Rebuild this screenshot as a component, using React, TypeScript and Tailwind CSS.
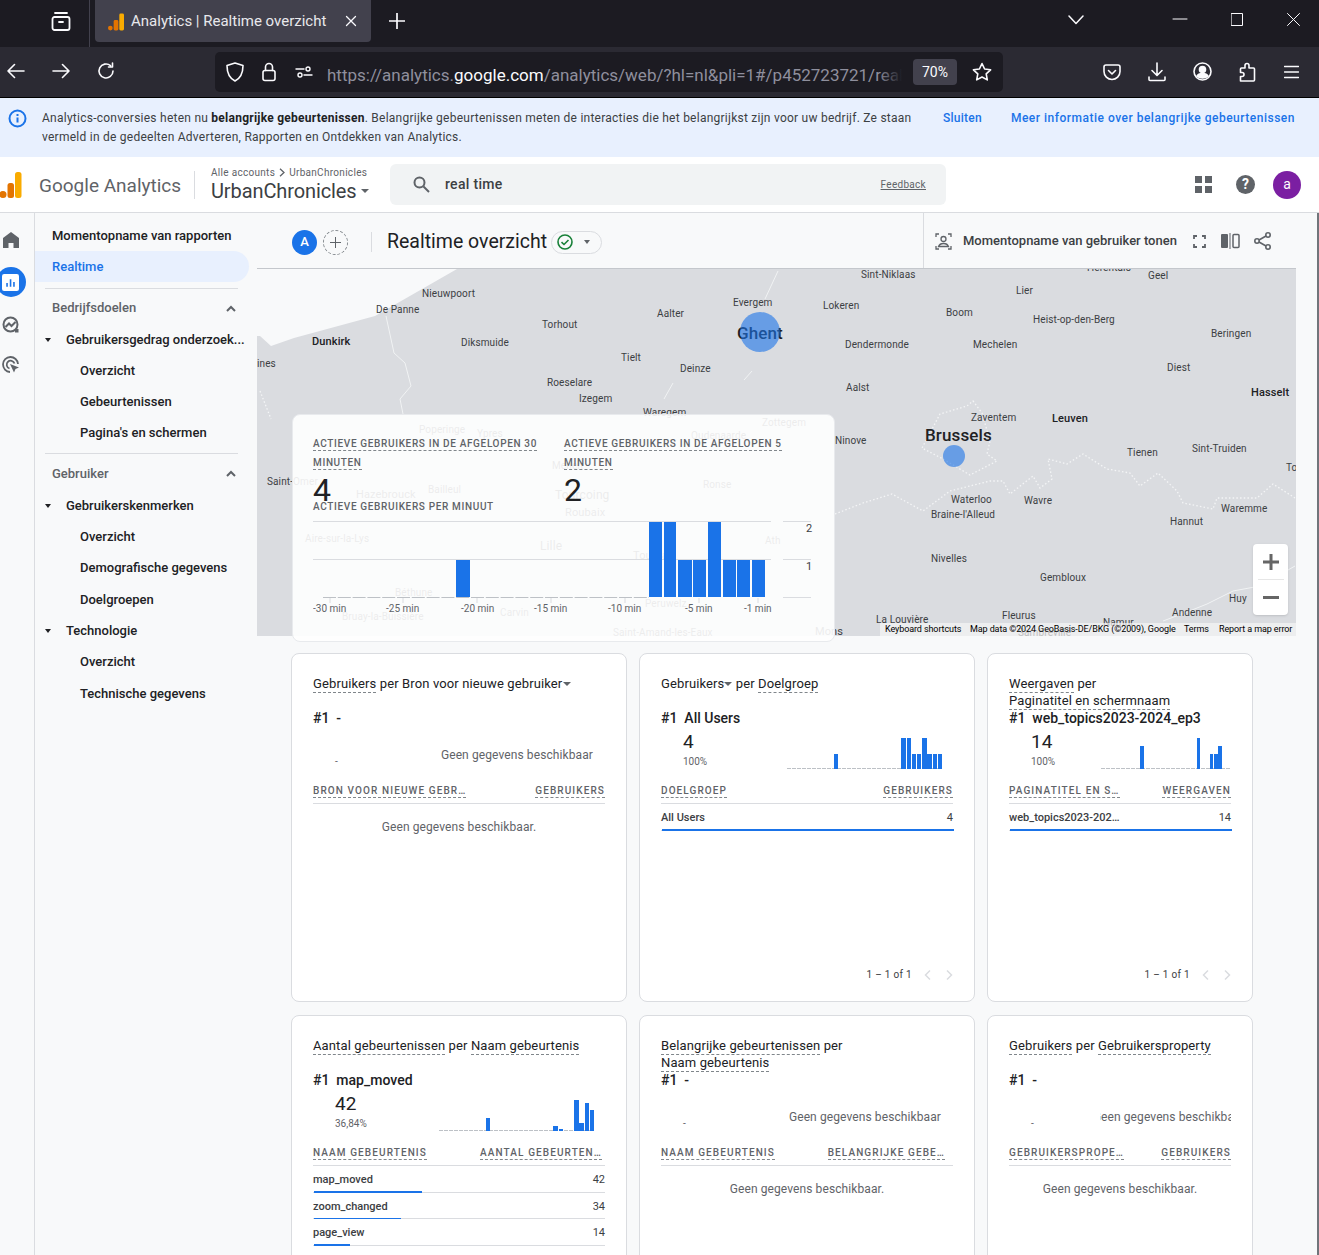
import React from "react";

const LABELS: [string, number, number, number, string?][] = [
  ["Sint-Niklaas", 861, 274, 10],["Herentals", 1087, 267, 10],["Geel", 1148, 275, 10],["Nieuwpoort", 422, 293, 10],["Evergem", 733, 302, 10],["Lokeren", 823, 305, 10],["Lier", 1016, 290, 10],["De Panne", 376, 309, 10],["Aalter", 657, 313, 10],["Boom", 946, 312, 10],["Heist-op-den-Berg", 1033, 319, 10],["Torhout", 542, 324, 10],["Beringen", 1211, 333, 10],["Dunkirk", 312, 340, 11, "m"],["Diksmuide", 461, 342, 10],["Dendermonde", 845, 344, 10],["Mechelen", 973, 344, 10],["Tielt", 621, 357, 10],["ines", 257, 363, 10],["Deinze", 680, 368, 10],["Diest", 1167, 367, 10],["Roeselare", 547, 382, 10],["Izegem", 579, 398, 10],["Aalst", 846, 387, 10],["Hasselt", 1251, 391, 11, "m"],["Waregem", 643, 412, 10],["Zottegem", 762, 422, 10],["Zaventem", 971, 417, 10],["Leuven", 1052, 417, 11, "m"],["Ninove", 835, 440, 10],["Brussels", 925, 434, 17, "m"],["Tienen", 1127, 452, 10],["Sint-Truiden", 1192, 448, 10],["To", 1286, 467, 10],["Saint-Omer", 267, 481, 10],["Waterloo", 951, 499, 10],["Wavre", 1024, 500, 10],["Braine-l'Alleud", 931, 514, 10],["Waremme", 1221, 508, 10],["Hannut", 1170, 521, 10],["Nivelles", 931, 558, 10],["Gembloux", 1040, 577, 10],["La Louvière", 876, 619, 10],["Fleurus", 1002, 615, 10],["Andenne", 1172, 612, 10],["Huy", 1229, 598, 10],["Namur", 1103, 622, 10],["Sambreville", 1018, 632, 10],["Mons", 815, 630, 11],["Ghent", 737, 332, 17, "m"],["Poperinge", 419, 429, 10],["Ypres", 477, 433, 10],["Oudenaarde", 691, 435, 10],["Menen", 552, 465, 10],["Hazebrouck", 356, 493, 11],["Bailleul", 428, 489, 10],["Tourcoing", 555, 494, 12],["Ronse", 703, 484, 10],["Roubaix", 565, 511, 11],["Aire-sur-la-Lys", 305, 538, 10],["Lille", 540, 545, 12],["Tournai", 633, 554, 11],["Ath", 765, 540, 10],["Béthune", 395, 592, 10],["Peruwelz", 645, 603, 10],["Carvin", 500, 612, 10],["Bruay-la-Buissière", 342, 616, 10],["Saint-Amand-les-Eaux", 613, 632, 10],
];

const Dash = ({ children, className = "" }: { children: React.ReactNode; className?: string }) => (
  <span className={"border-b border-dashed border-[#80868b] pb-px " + className}>{children}</span>
);

function Spark({ w, bars }: { w: number; bars: [number, number, number][] }) {
  return (
    <svg width={w} height={40} viewBox={`0 0 ${w} 40`} className="block shrink-0">
      <line x1="0" x2={w} y1="39.5" y2="39.5" stroke="#bdc1c6" strokeDasharray="4 1" />
      {bars.map(([x, bw, h], i) => (
        <rect key={i} x={x} y={40 - h} width={bw} height={h} fill="#1a73e8" />
      ))}
    </svg>
  );
}

type Row = { name: string; value: string; bar: number };
function Card({
  title, rank, value, pct, spark, head, headPr = 0, rows, pager, leftW = 126, empty, clip,
}: {
  title: React.ReactNode; rank: string; value?: string; pct?: string; spark?: React.ReactNode;
  head: [string, string]; headPr?: number; rows?: Row[]; pager?: boolean; leftW?: number; empty?: string; clip?: boolean;
}) {
  return (
    <div className="bg-white rounded-lg border border-[#dadce0] px-[21px] pt-[21px] pb-[19px] flex flex-col overflow-hidden">
      <div className="h-[35px] text-[13px] leading-[17px] tracking-[0.12px] text-[#202124]">{title}</div>
      <div className="h-[17px] leading-[17px] text-[14px] font-medium text-[#202124] whitespace-nowrap">{rank}</div>
      <div className="h-[50px]">
        {value ? (
          <div className="flex pt-[2px]">
            <div className="shrink-0 pt-[1px]" style={{ width: leftW }}>
              <div className="pl-[22px] text-[19px] leading-[24px] text-[#202124]">{value}</div>
              <div className="pl-[22px] text-[10px] leading-[14px] text-[#5f6368] mt-[1px]">{pct}</div>
            </div>
            {spark}
          </div>
        ) : (
          <div className="flex items-start h-full overflow-hidden">
            <div className="w-[22px] shrink-0" />
            <div className="text-[10px] leading-[12px] mt-[29px] text-[#5f6368]">-</div>
            {clip ? (
              <div className="flex-1 ml-[66px] mt-[20px] overflow-hidden">
                <div className="-ml-[7px] text-[12px] leading-[16px] tracking-[0.1px] text-[#5f6368] whitespace-nowrap">Geen gegevens beschikbaar</div>
              </div>
            ) : (
              <div className="flex-1 text-right text-[12px] leading-[16px] tracking-[0.1px] mt-[20px] text-[#5f6368] whitespace-nowrap pr-[12px]">Geen gegevens beschikbaar</div>
            )}
          </div>
        )}
      </div>
      <div className="h-[27px] flex justify-between border-b border-[#dadce0] text-[10px] leading-[13px] font-medium tracking-[1.1px] text-[#5f6368] pt-[7px] whitespace-nowrap" style={{ paddingRight: headPr }}>
        <div><Dash>{head[0]}</Dash></div>
        <div><Dash>{head[1]}</Dash></div>
      </div>
      {rows ? (
        <div>
          {rows.map((r) => (
            <div key={r.name} className="relative h-[26.5px] flex justify-between items-center border-b border-[#dadce0] text-[11px] font-medium text-[#3c4043] pt-[3px]">
              <span>{r.name}</span><span className="font-normal text-[#3c4043]">{r.value}</span>
              <div className="absolute left-[1px] -bottom-px h-[1.5px] bg-[#1a73e8]" style={{ width: r.bar }} />
            </div>
          ))}
        </div>
      ) : (
        <div className="text-center text-[12px] tracking-[0.1px] text-[#5f6368] mt-[15px] leading-[16px]">{empty}</div>
      )}
      {pager && (
        <div className="mt-auto flex justify-end items-center gap-[11px] text-[10px] tracking-[0.3px] text-[#3c4043] leading-[14px] -mr-px">
          <span>1 – 1 of 1</span>
          <svg width="10" height="12" viewBox="0 0 10 12" fill="none" stroke="#dadce0" strokeWidth="1.5"><path d="M7 1.5 2.5 6 7 10.5" /></svg>
          <svg width="10" height="12" viewBox="0 0 10 12" fill="none" stroke="#dadce0" strokeWidth="1.5"><path d="M3 1.5 7.5 6 3 10.5" /></svg>
        </div>
      )}
    </div>
  );
}

const NavRow = ({ children, indent = 45, h = 31 }: { children: React.ReactNode; indent?: number; h?: number }) => (
  <div className="flex items-center text-[13px] font-medium text-[#202124] whitespace-nowrap" style={{ paddingLeft: indent, height: h }}>{children}</div>
);
const Caret = () => <span className="w-0 h-0 border-x-[3.5px] border-x-transparent border-t-[4px] border-t-[#202124] absolute left-[10px]" />;
const Chev = () => (
  <svg width="10" height="7" viewBox="0 0 10 7" fill="none" stroke="#5f6368" strokeWidth="2" className="ml-auto mr-[21px]"><path d="M1 6l4-4 4 4" /></svg>
);
const ic = { fill: "none", stroke: "#fbfbfe", strokeWidth: 1.6, strokeLinecap: "round", strokeLinejoin: "round" } as const;
const T = "inline-block mb-[2px] w-0 h-0 border-x-[4px] border-x-transparent border-t-[4px] border-t-[#5f6368]";

export default function App() {
  return (
    <div className="w-[1319px] h-[1255px] overflow-hidden flex flex-col bg-[#f8f9fa] text-[#202124] font-['Roboto',sans-serif]">
      {/* tab strip */}
      <div className="h-[47px] shrink-0 bg-[#1c1b22] flex text-[#fbfbfe]">
        <div className="w-[90px] border-r border-[#42414d] flex justify-end items-start pt-[11px] pr-[18px]">
          <svg width="20" height="20" viewBox="0 0 20 20" {...ic} strokeWidth={1.8}><rect x="1.5" y="6" width="17" height="13" rx="2" /><path d="M4 2h12M8 11h4" /></svg>
        </div>
        <div className="ml-[5px] w-[276px] h-[42px] bg-[#42414d] rounded-b-[4px] flex items-center pl-[13px] pr-[14px]">
          <svg width="16" height="19" viewBox="0 0 17 19"><rect x="12" y="1" width="5" height="18" rx="1.5" fill="#f9ab00" /><rect x="6" y="8" width="5" height="11" rx="1.5" fill="#e37400" /><circle cx="2.5" cy="16.5" r="2.5" fill="#e37400" /></svg>
          <span className="ml-[7px] text-[15px] text-[#e8e8ec] whitespace-nowrap">Analytics | Realtime overzicht</span>
          <svg className="ml-auto" width="12" height="12" viewBox="0 0 12 12" {...ic} strokeWidth={1.3}><path d="M1.5 1.5l9 9M10.5 1.5l-9 9" /></svg>
        </div>
        <div className="ml-[18px] pt-[13px]">
          <svg width="16" height="16" viewBox="0 0 16 16" {...ic} strokeWidth={1.7}><path d="M8 0v16M0 8h16" /></svg>
        </div>
        <div className="ml-auto flex items-start pt-[15px] pr-[19px]">
          <svg width="16" height="10" viewBox="0 0 16 10" {...ic} strokeWidth={1.5}><path d="M1 1l7 7.5L15 1" /></svg>
          <svg className="ml-[88px] mt-[3px]" width="16" height="2" viewBox="0 0 16 2" {...ic} strokeWidth={1}><path d="M1 1h14" /></svg>
          <svg className="ml-[43px] -mt-[2px]" width="12" height="13" viewBox="0 0 12 13" {...ic} strokeWidth={1}><rect x=".5" y=".5" width="11" height="12" /></svg>
          <svg className="ml-[44px] -mt-[2px]" width="13" height="13" viewBox="0 0 13 13" {...ic} strokeWidth={1}><path d="M.5.5l12 12M12.5.5l-12 12" /></svg>
        </div>
      </div>
      {/* toolbar */}
      <div className="h-[51px] shrink-0 bg-[#2b2a33] border-b border-black flex items-center">
        <div className="w-[215px] flex items-center gap-[27px] pl-[7px] -mt-[3px]">
          <svg width="18" height="16" viewBox="0 0 18 16" {...ic}><path d="M17 8H1M7.5 1.5 1 8l6.5 6.5" /></svg>
          <svg width="18" height="16" viewBox="0 0 18 16" {...ic}><path d="M1 8h16M10.5 1.5 17 8l-6.5 6.5" /></svg>
          <svg width="18" height="18" viewBox="0 0 18 18" {...ic}><path d="M16 9a7 7 0 1 1-2.5-5.4M15.5 1v4h-4" /></svg>
        </div>
        <div className="w-[788px] h-[40px] bg-[#1c1b22] rounded-[5px] flex items-center pl-[11px] pr-[10px]">
          <svg className="shrink-0" width="18" height="20" viewBox="0 0 18 20" {...ic}><path d="M9 1l8 2.5c0 7-2 12.500-8 15.500C3 16 1 10.500 1 3.500z" /></svg>
          <svg className="ml-[18px] shrink-0" width="14" height="20" viewBox="0 0 14 20" {...ic}><rect x="1" y="8.5" width="12" height="10" rx="2" /><path d="M3.5 8.5V5a3.5 3.5 0 0 1 7 0v3.5" /></svg>
          <svg className="ml-[19px] shrink-0" width="18" height="12" viewBox="0 0 18 12" {...ic} strokeWidth={1.4}><circle cx="13" cy="3" r="2" /><circle cx="5" cy="9" r="2" /><path d="M1 3h8M9 9h8" /></svg>
          <div className="relative ml-[14px] w-[575px] shrink-0 overflow-hidden whitespace-nowrap text-[17px] leading-[24px] mt-[6px] text-[#8f8f9d]">
            https://analytics.<span className="text-[#fbfbfe]">google.com</span>/analytics/web/?hl=nl&amp;pli=1#/p452723721/realtime
            <div className="absolute right-0 top-0 bottom-0 w-[24px] bg-gradient-to-r from-transparent to-[#1c1b22]" />
          </div>
          <div className="ml-[11px] w-[44px] h-[26px] rounded-[4px] bg-[#42414d] text-[#fbfbfe] text-[14px] flex items-center justify-center shrink-0">70%</div>
          <svg className="ml-[15px] shrink-0" width="20" height="20" viewBox="0 0 20 20" {...ic}><path d="M10 1.5l2.600 5.500 6 .8-4.400 4.100 1.100 6-5.300-2.900-5.300 2.900 1.100-6L1.400 7.800l6-.8z" /></svg>
        </div>
        <div className="flex items-center pl-[100px] -mt-[1px]">
          <svg width="18" height="18" viewBox="0 0 18 18" {...ic}><path d="M3 2h12a2 2 0 0 1 2 2v4.500a8 8 0 0 1-16 0V4a2 2 0 0 1 2-2z" /><path d="M5.5 7.5 9 11l3.500-3.500" /></svg>
          <svg className="ml-[27px]" width="18" height="20" viewBox="0 0 18 20" {...ic}><path d="M9 1v12M4 8.500 9 13.500l5-5M1 15v2.500a1 1 0 0 0 1 1h14a1 1 0 0 0 1-1V15" /></svg>
          <svg className="ml-[27px]" width="19" height="19" viewBox="0 0 19 19" {...ic}><circle cx="9.5" cy="9.5" r="8.5" /><circle cx="9.5" cy="7.5" r="3" fill="#fbfbfe" /><path d="M4 14c1-2 3-2.500 5.500-2.500S14 12 15 14c-1.500 1.500-3.500 2-5.500 2S5.500 15.500 4 14z" fill="#fbfbfe" /></svg>
          <svg className="ml-[26px]" width="18" height="20" viewBox="0 0 18 20" {...ic}><path d="M9 1.5a2 2 0 0 1 2 2V6h4.500a1 1 0 0 1 1 1v11a1 1 0 0 1-1 1h-13v-4.500h1.500a2 2 0 0 0 0-4H2.500V7a1 1 0 0 1 1-1H7V3.500a2 2 0 0 1 2-2z" /></svg>
          <svg className="ml-[28px]" width="15" height="14" viewBox="0 0 15 14" {...ic} strokeWidth={1.5}><path d="M.5 1.500h14M.5 7h14M.5 12.500h14" /></svg>
        </div>
      </div>
      {/* banner */}
      <div className="h-[59px] shrink-0 bg-[#e8f0fe] flex text-[12px] leading-[19px] text-[#3c4043] tracking-[0.25px] pt-[11px]">
        <svg className="ml-[8px] shrink-0" width="19" height="19" viewBox="0 0 19 19" fill="none" stroke="#1a73e8" strokeWidth="2"><circle cx="9.5" cy="9.5" r="8" /><path d="M9.5 8.500v5M9.500 5v2" /></svg>
        <div className="ml-[15px] w-[880px] shrink-0">
          Analytics-conversies heten nu <b className="text-[#202124]">belangrijke gebeurtenissen</b>. Belangrijke gebeurtenissen meten de interacties die het belangrijkst zijn voor uw bedrijf. Ze staan vermeld in de gedeelten Adverteren, Rapporten en Ontdekken van Analytics.
        </div>
        <span className="ml-[21px] font-medium text-[#1a73e8] whitespace-nowrap">Sluiten</span>
        <span className="ml-[29px] font-medium tracking-[0.5px] text-[#1a73e8] whitespace-nowrap">Meer informatie over belangrijke gebeurtenissen</span>
      </div>
      {/* GA header */}
      <div className="h-[56px] shrink-0 bg-white border-b border-[#dadce0] flex items-center relative">
        <svg className="shrink-0" width="22" height="26" viewBox="0 0 22 26"><rect x="15" y="0" width="6.5" height="26" rx="2.5" fill="#f9ab00" /><rect x="7.5" y="11" width="6.5" height="15" rx="2.5" fill="#e37400" /><circle cx="3" cy="22.5" r="3.5" fill="#e37400" /></svg>
        <span className="ml-[17px] mt-[3px] text-[19px] text-[#5f6368] whitespace-nowrap w-[143px]">Google Analytics</span>
        <div className="ml-[12px] w-px h-[28px] bg-[#dadce0]" />
        <div className="ml-[16px] w-[179px] shrink-0">
          <div className="flex items-center text-[10px] leading-[12px] text-[#5f6368] tracking-[0.3px]">
            Alle accounts
            <svg className="mx-[4px]" width="6" height="9" viewBox="0 0 6 9" fill="none" stroke="#5f6368" strokeWidth="1.3"><path d="M1 .7 5 4.500 1 8.300" /></svg>
            UrbanChronicles
          </div>
          <div className="flex items-center text-[20px] leading-[24px] text-[#3c4043] tracking-[-0.1px]">
            UrbanChronicles
            <span className="ml-[4px] w-0 h-0 border-x-[4px] border-x-transparent border-t-[4px] border-t-[#5f6368]" />
          </div>
        </div>
        <div className="w-[556px] h-[41px] rounded-md bg-[#f1f3f4] flex items-center pl-[23px] pr-[20px]">
          <svg width="17" height="17" viewBox="0 0 17 17" fill="none" stroke="#5f6368" strokeWidth="2"><circle cx="6.5" cy="6.5" r="5" /><path d="M10.5 10.5 16 16" /></svg>
          <span className="ml-[15px] text-[14px] tracking-[0.3px] font-medium text-[#3c4043]">real time</span>
          <span className="ml-auto text-[10px] underline text-[#5f6368] tracking-[0.3px]">Feedback</span>
        </div>
        <div className="ml-[249px] grid grid-cols-2 gap-[3px]">
          <i className="block w-[7px] h-[7px] bg-[#5f6368]" /><i className="block w-[7px] h-[7px] bg-[#5f6368]" /><i className="block w-[7px] h-[7px] bg-[#5f6368]" /><i className="block w-[7px] h-[7px] bg-[#5f6368]" />
        </div>
        <div className="ml-[24px] w-[19px] h-[19px] rounded-full bg-[#5f6368] text-white text-[14px] leading-[19px] font-bold flex items-center justify-center">?</div>
        <div className="ml-[18px] w-[28px] h-[28px] rounded-full bg-[#7b1fa2] text-white text-[14px] flex items-center justify-center">a</div>
      </div>
      {/* body */}
      <div className="flex-1 flex min-h-0 relative">
        {/* rail */}
        <div className="w-[35px] shrink-0 border-r border-[#dadce0] flex flex-col items-center pr-[13px] pt-[19px] overflow-visible">
          <svg className="shrink-0" width="16" height="16" viewBox="0 0 16 16" fill="#5f6368"><path d="M8 0 0 6v10h5.500v-5h5v5H16V6z" /></svg>
          <div className="shrink-0 w-[30px] h-[30px] rounded-full bg-[#1a73e8] flex items-center justify-center mt-[19px]">
            <svg width="17" height="17" viewBox="0 0 16 16"><rect width="16" height="16" rx="2" fill="#fff" /><path d="M4 8.500h1.500V12H4zM7.300 5h1.500v7H7.300zM10.500 7.500H12V12h-1.500z" fill="#1a73e8" /></svg>
          </div>
          <svg className="mt-[19px] shrink-0" width="17" height="17" viewBox="0 0 17 17" fill="none" stroke="#5f6368" strokeWidth="2"><circle cx="8.5" cy="8.5" r="7" /><path d="M3.500 11 7 7.500l2.500 2.500 4-4" /><path d="M13 13h3.500v3.500H13z" fill="#5f6368" stroke="none" /></svg>
          <svg className="mt-[23px] shrink-0" width="18" height="18" viewBox="0 0 18 18" fill="none" stroke="#5f6368" strokeWidth="1.8"><path d="M8 16A7.500 7.500 0 1 1 16 8" /><path d="M7.500 12.500A4 4 0 1 1 12.500 7.500" /><path d="M8 8l9 3.500-3.500 1.500-1.500 3.500z" fill="#5f6368" stroke="none" /></svg>
        </div>
        {/* side nav */}
        <div className="w-[222px] shrink-0 pt-[7px] flex flex-col relative">
          <NavRow indent={17}>Momentopname van rapporten</NavRow>
          <div className="w-[214px] h-[31px] rounded-r-full bg-[#e8f0fe] flex items-center pl-[17px] text-[13px] font-medium text-[#1a73e8]">Realtime</div>
          <div className="ml-[10px] w-[193px] mt-[6px] border-t border-[#dadce0]" />
          <div className="h-[38px] flex items-center pl-[17px] text-[13px] font-medium text-[#5f6368]">Bedrijfsdoelen<Chev /></div>
          <NavRow indent={31} h={25}><Caret />Gebruikersgedrag onderzoek...</NavRow>
          <NavRow indent={45} h={37}>Overzicht</NavRow>
          <NavRow indent={45} h={25}>Gebeurtenissen</NavRow>
          <NavRow indent={45} h={37}>Pagina's en schermen</NavRow>
          <div className="ml-[10px] w-[193px] mt-[2px] border-t border-[#dadce0]" />
          <div className="h-[39px] flex items-center pl-[17px] text-[13px] font-medium text-[#5f6368]">Gebruiker<Chev /></div>
          <NavRow indent={31} h={25}><Caret />Gebruikerskenmerken</NavRow>
          <NavRow indent={45} h={37}>Overzicht</NavRow>
          <NavRow indent={45} h={26}>Demografische gegevens</NavRow>
          <NavRow indent={45} h={37}>Doelgroepen</NavRow>
          <NavRow indent={31} h={25}><Caret />Technologie</NavRow>
          <NavRow indent={45} h={37}>Overzicht</NavRow>
          <NavRow indent={45} h={28}>Technische gegevens</NavRow>
        </div>
        {/* main */}
        <div className="flex-1 min-w-0 relative">
          <div className="h-[55px] flex items-center relative">
            <div className="ml-[35px] w-[25px] h-[25px] rounded-full bg-[#1a73e8] text-white text-[13px] font-medium flex items-center justify-center mt-[3px]">A</div>
            <div className="ml-[6px] w-[25px] h-[25px] rounded-full border border-dashed border-[#80868b] text-[#5f6368] flex items-center justify-center mt-[3px]">
              <svg width="11" height="11" viewBox="0 0 11 11" stroke="#5f6368" strokeWidth="1"><path d="M5.5 0v11M0 5.5h11" /></svg>
            </div>
            <div className="ml-[23px] w-px h-[20px] bg-[#dadce0] mt-[3px]" />
            <span className="ml-[15px] text-[19.5px] text-[#202124] whitespace-nowrap mt-[3px] w-[160px]">Realtime overzicht</span>
            <div className="ml-[4px] w-[51px] h-[23px] rounded-full border border-[#dadce0] flex items-center pl-[5px] mt-[3px]">
              <svg width="16" height="16" viewBox="0 0 16 16" fill="none" stroke="#188038" strokeWidth="1.6"><circle cx="8" cy="8" r="7" /><path d="M4.5 8.200 7 10.500l4.500-4.500" /></svg>
              <span className="ml-[11px] w-0 h-0 border-x-[3.5px] border-x-transparent border-t-[4px] border-t-[#5f6368]" />
            </div>
            <div className="ml-[321px] h-[55px] border-l border-[#dadce0] flex items-center pl-[11px] flex-1 pt-[1px]">
              <svg width="17" height="17" viewBox="0 0 17 17" fill="none" stroke="#5f6368" strokeWidth="1.3"><path d="M1 4V1h3M13 1h3v3M1 13v3h3M13 16h3v-3" /><circle cx="8.5" cy="6" r="2.5" /><path d="M3.5 13.500c1-2.500 3-3 5-3s4 .5 5 3z" /></svg>
              <span className="ml-[11px] text-[13px] font-medium text-[#3c4043] whitespace-nowrap w-[214px]">Momentopname van gebruiker tonen</span>
              <svg className="ml-[16px]" width="13" height="13" viewBox="0 0 13 13" fill="none" stroke="#5f6368" strokeWidth="1.8"><path d="M1 4V1h3M9 1h3v3M1 9v3h3M12 9v3H9" /></svg>
              <svg className="ml-[15px]" width="19" height="16" viewBox="0 0 19 16"><rect x="0" y="1" width="7" height="14" rx="1" fill="#5f6368" /><rect x="8.5" y="0" width="1" height="16" fill="#5f6368" /><rect x="12" y="1.5" width="6" height="13" rx="1" fill="none" stroke="#5f6368" strokeWidth="1.5" /></svg>
              <svg className="ml-[14px]" width="17" height="18" viewBox="0 0 17 18" fill="none" stroke="#5f6368" strokeWidth="1.6"><circle cx="14" cy="3" r="2.2" /><circle cx="3" cy="9" r="2.2" /><circle cx="14" cy="15" r="2.2" /><path d="M5 8l7-4M5 10l7 4" /></svg>
            </div>
          </div>
          {/* map */}
          <div className="relative w-[1039px] h-[368px] bg-[#dadce0] overflow-hidden border-t border-[#c4c7cc]">
            <svg className="absolute inset-0" width="1039" height="368" viewBox="257 268 1039 368" fill="none">
              <path d="M257 268H457L375 315 294 337 271 345 260 335H257z" fill="#f8f9fa" />
              <g stroke="#f1f3f4" strokeWidth="1">
                <path d="M386 315l8 37 11 10 6 23-11 13 3 15" />
                <path d="M778 270l-13 28M752 370l-8 9M673 382l-9 16" />
                <path d="M1295 565l-35 20-27 5-26 13-20 8-24 9" />
              </g>
              <g stroke="#f4f5f6" strokeWidth="1.3" strokeDasharray="1.5 2.2">
                <path d="M973 400l9 12 8 28-3 13 10 7-27 14-27-16-21-11 18-34 27-8z" />
                <path d="M835 513l28-11 29-9 31 17 27-20 40-10 13 0 7 13 23-18 7 12 12-9-4-20 19 5 16-10 24 15 23 4 10 13 18-13 19 18 6 12 30 6 4-11 40 0 16-14 22 14" />
                <path d="M260 390l11 28" />
              </g>
            </svg>
            {LABELS.map(([t, x, y, s, m]) => (
              <span key={t} className={"absolute whitespace-nowrap leading-none tracking-[0.12px] -translate-y-1/2 " + (m ? "font-medium text-[#202124]" : "text-[#3c4043]")} style={{ left: x - 257, top: y - 268, fontSize: s }}>{t}</span>
            ))}
            <div className="absolute left-[483px] top-[43px] w-[40px] h-[40px] rounded-full bg-[#1a73e8]/60" />
            <div className="absolute left-[686px] top-[176px] w-[22px] h-[22px] rounded-full bg-[#1a73e8]/60" />
            <div className="absolute left-[996px] top-[275px] w-[35px] h-[71px] bg-white rounded-sm shadow flex flex-col items-center">
              <svg className="mt-[10px]" width="16" height="16" viewBox="0 0 16 16" fill="#666"><path d="M6.5 0h3v6.500H16v3H9.500V16h-3V9.500H0v-3h6.500z" /></svg>
              <div className="w-[26px] mt-[9px] border-t border-[#e6e6e6]" />
              <div className="mt-[16px] w-[16px] h-[3px] bg-[#666]" />
            </div>
            <div className="absolute right-0 bottom-0 h-[13px] w-[416px] bg-[#f5f5f5]/70 flex items-center text-[9px] tracking-[-0.1px] text-black whitespace-nowrap">
              <span className="ml-[5px] w-[80px]">Keyboard shortcuts</span>
              <span className="ml-[5px] w-[214px]">Map data ©2024 GeoBasis-DE/BKG (©2009), Google</span>
              <span className="w-[35px]">Terms</span>
              <span>Report a map error</span>
            </div>
          </div>
          {/* cards */}
          <div className="pl-[34px] pt-[17px] grid grid-cols-[336px_336px_266px] auto-rows-[349px] gap-x-[12px] gap-y-[13px]">
            <Card
              title={<><Dash>Gebruikers</Dash> per Bron voor nieuwe gebruiker<span className={"ml-px " + T} /></>}
              rank={"#1\u00a0\u00a0-"}
              head={["BRON VOOR NIEUWE GEBR…", "GEBRUIKERS"]}
              empty="Geen gegevens beschikbaar."
            />
            <Card
              title={<>Gebruikers<span className={T} /> per <Dash>Doelgroep</Dash></>}
              rank={"#1\u00a0\u00a0All Users"}
              value="4" pct="100%"
              spark={<Spark w={155} bars={[[47,4,15],[114,5,31],[120,4,31],[125,4,15],[130,4,15],[135,5,31],[140,5,15],[146,4,15],[151,4,15]]} />}
              head={["DOELGROEP", "GEBRUIKERS"]}
              rows={[{ name: "All Users", value: "4", bar: 292 }]}
              pager
            />
            <Card
              title={<><Dash>Weergaven</Dash> per<br /><Dash>Paginatitel en schermnaam</Dash></>}
              rank={"#1\u00a0\u00a0web_topics2023-2024_ep3"}
              value="14" pct="100%" leftW={92}
              spark={<Spark w={129} bars={[[39,4,23],[96,3,31],[109,3,15],[113,4,15],[117,4,23]]} />}
              head={["PAGINATITEL EN S…", "WEERGAVEN"]}
              rows={[{ name: "web_topics2023-202…", value: "14", bar: 222 }]}
              pager
            />
            <Card
              title={<><Dash>Aantal gebeurtenissen</Dash> per <Dash>Naam gebeurtenis</Dash></>}
              rank={"#1\u00a0\u00a0map_moved"}
              value="42" pct="36,84%"
              spark={<Spark w={155} bars={[[47,4,13],[114,5,5],[120,4,2],[135,5,31],[140,5,8],[146,4,28],[151,4,21]]} />}
              head={["NAAM GEBEURTENIS", "AANTAL GEBEURTEN…"]} headPr={3}
              rows={[{ name: "map_moved", value: "42", bar: 108 }, { name: "zoom_changed", value: "34", bar: 87 }, { name: "page_view", value: "14", bar: 36 }, { name: "scroll", value: "11", bar: 28 }]}
            />
            <Card
              title={<><Dash>Belangrijke gebeurtenissen</Dash> per<br /><Dash>Naam gebeurtenis</Dash></>}
              rank={"#1\u00a0\u00a0-"}
              head={["NAAM GEBEURTENIS", "BELANGRIJKE GEBE…"]} headPr={8}
              empty="Geen gegevens beschikbaar."
            />
            <Card
              title={<><Dash>Gebruikers</Dash> per <Dash>Gebruikersproperty</Dash></>}
              rank={"#1\u00a0\u00a0-"}
              head={["GEBRUIKERSPROPE…", "GEBRUIKERS"]}
              empty="Geen gegevens beschikbaar."
              clip
            />
          </div>
          {/* overlay stats card */}
          <div className="absolute left-[35px] top-[201px] w-[543px] h-[228px] bg-white/90 rounded-lg border border-[#e8eaed] px-[20px] pt-[19px]">
            <div className="flex text-[10px] font-medium tracking-[0.65px] text-[#5f6368] leading-[19px]">
              <div className="w-[251px] shrink-0">
                <div className="w-[226px]"><Dash className="[box-decoration-break:clone]">ACTIEVE GEBRUIKERS IN DE AFGELOPEN 30 MINUTEN</Dash></div>
                <div className="text-[32px] font-normal tracking-normal text-[#202124] leading-[32px] mt-[2px]">4</div>
              </div>
              <div className="w-[226px]">
                <div><Dash className="[box-decoration-break:clone]">ACTIEVE GEBRUIKERS IN DE AFGELOPEN 5 MINUTEN</Dash></div>
                <div className="text-[32px] font-normal tracking-normal text-[#202124] leading-[32px] mt-[2px]">2</div>
              </div>
            </div>
            <div className="text-[10px] font-medium tracking-[0.65px] text-[#5f6368] leading-[13px] -mt-[6px]">ACTIEVE GEBRUIKERS PER MINUUT</div>
            <svg className="block mt-[7px]" width="500" height="100" viewBox="313 520 500 100">
              <g stroke="#dadce0">
                <path d="M313 521.5h458M783 521.5h28M313 559.5h458M783 559.5h28M783 597.5h28" />
                <path d="M323 597.5H649" stroke="#bdc1c6" strokeDasharray="13 1.8" />
                <path d="M330 598v5M403 598v5M477 598v5M551 598v5M625 598v5M699 598v5M758 598v5" />
              </g>
              {[[456,14,37],[649,13,75],[664,12,75],[678,14,37],[693,13,37],[708,13,75],[723,13,37],[737,13,37],[752,13,37]].map(([x, w, h]) => (
                <rect key={x} x={x} y={597 - h} width={w} height={h} fill="#1a73e8" />
              ))}
              <g fontSize="10" fill="#5f6368" fontFamily="Roboto, sans-serif">
                {[["-30 min",313],["-25 min",386],["-20 min",461],["-15 min",534],["-10 min",608],["-5 min",685],["-1 min",744]].map(([t, x]) => (
                  <text key={t as string} x={x as number} y="612">{t}</text>
                ))}
              </g>
              <g fontSize="11" fill="#3c4043" fontFamily="Roboto, sans-serif">
                <text x="806" y="532">2</text>
                <text x="806" y="570">1</text>
              </g>
            </svg>
          </div>
        </div>
        <div className="absolute right-0 top-0 bottom-0 w-[2px] bg-[#70757a]" />
      </div>
    </div>
  );
}
